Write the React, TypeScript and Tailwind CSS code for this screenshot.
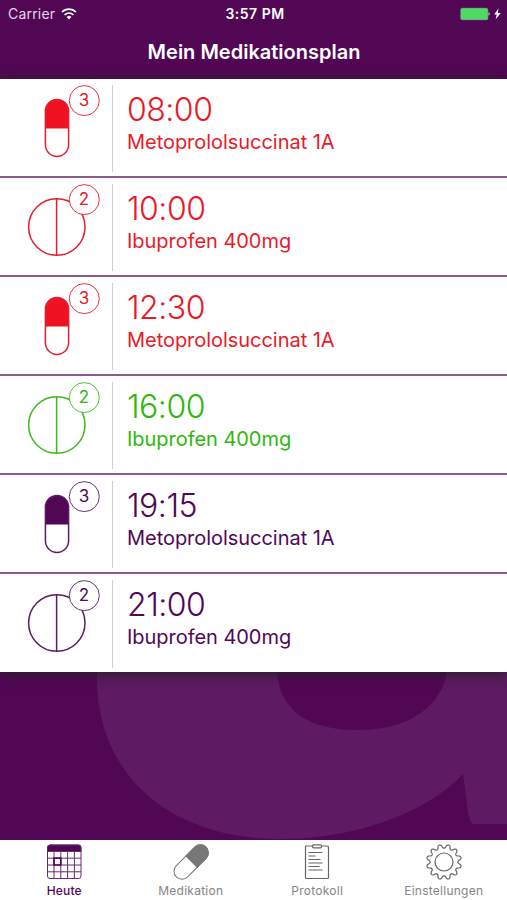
const RED = { text: 'text-[#e81a28]', stroke: '#e31d2b', fill: '#f01222' }
const GREEN = { text: 'text-[#2fb80c]', stroke: '#3fb81f', fill: '#2fb80c' }
const PURPLE = { text: 'text-[#520755]', stroke: '#5c1b62', fill: '#520755' }

interface Intake {
  time: string
  name: string
  kind: 'capsule' | 'tablet'
  count: number
  color: typeof RED
}

const intakes: Intake[] = [
  { time: '08:00', name: 'Metoprololsuccinat 1A', kind: 'capsule', count: 3, color: RED },
  { time: '10:00', name: 'Ibuprofen 400mg', kind: 'tablet', count: 2, color: RED },
  { time: '12:30', name: 'Metoprololsuccinat 1A', kind: 'capsule', count: 3, color: RED },
  { time: '16:00', name: 'Ibuprofen 400mg', kind: 'tablet', count: 2, color: GREEN },
  { time: '19:15', name: 'Metoprololsuccinat 1A', kind: 'capsule', count: 3, color: PURPLE },
  { time: '21:00', name: 'Ibuprofen 400mg', kind: 'tablet', count: 2, color: PURPLE },
]

function PillIcon({ kind, color }: { kind: Intake['kind']; color: typeof RED }) {
  return (
    <svg width="112" height="96" fill="none" stroke={color.stroke} strokeWidth="1.5">
      {kind === 'capsule' ? (
        <>
          <path d="M45.5 49.5V32a11.5 11.5 0 0 1 23 0v17.5z" fill={color.fill} stroke="none" />
          <rect x="45.4" y="20.4" width="23.2" height="57" rx="11.6" />
        </>
      ) : (
        <>
          <circle cx="56.8" cy="49" r="28.2" />
          <path d="M56.6 21v56" />
        </>
      )}
      <circle cx="84.3" cy="21.6" r="15" fill="white" strokeWidth="0.9" />
    </svg>
  )
}

function IntakeRow({ item, last }: { item: Intake; last: boolean }) {
  return (
    <div className={`flex flex-col ${last ? 'h-[98px]' : 'h-[99px]'}`}>
      <div className="flex-1 flex">
        <div className={`relative w-[112px] shrink-0 ${item.color.text}`}>
          <PillIcon kind={item.kind} color={item.color} />
          <span className="absolute left-[69px] top-[7px] w-[30px] h-[30px] flex items-center justify-center text-[17px]">
            {item.count}
          </span>
        </div>
        <div className="w-px mt-[6px] mb-[4px] bg-[#cfcfd2]" />
        <div className={`pl-[14px] pt-[11px] ${item.color.text}`}>
          <div className="text-[32px] leading-[40px] font-light tracking-[-0.5px]">{item.time}</div>
          <div className="text-[20px] leading-[24px] tracking-[-0.04px]">{item.name}</div>
        </div>
      </div>
      {!last && <div className="h-[2px] bg-[#8b5c90]" />}
    </div>
  )
}

// closed outline with rounded teeth, a gap sits at the top
function gearPath(teeth: number) {
  const pts: string[] = []
  const n = teeth * 16
  for (let i = 0; i < n; i++) {
    const a = (i / n) * Math.PI * 2
    const wave = Math.tanh(1.6 * Math.cos(a * teeth + Math.PI)) / Math.tanh(1.6)
    const r = 15.7 + 1.8 * wave
    pts.push(`${(18 + r * Math.sin(a)).toFixed(2)} ${(18 - r * Math.cos(a)).toFixed(2)}`)
  }
  return `M${pts.join('L')}Z`
}

function CalendarIcon() {
  return (
    <svg width="36" height="36" fill="none" stroke="#692c70" strokeWidth="1">
      <rect x="1.5" y="1" width="33.5" height="33.5" rx="2.5" />
      <path d="M1.5 7.5V3.5A2.5 2.5 0 0 1 4 1h28.5A2.5 2.5 0 0 1 35 3.5V7.5z" fill="#520755" />
      <path d="M8 8v26.5M14.8 8v26.5M21.6 8v26.5M28.4 8v26.5M1.5 14.2h33.5M1.5 21h33.5M1.5 27.8h33.5" />
      <path d="M8 14.2h6.8v6.8h-6.8z" strokeWidth="1.7" stroke="#520755" />
    </svg>
  )
}

function CapsuleIcon() {
  return (
    <svg width="36" height="36" fill="none" stroke="#777" strokeWidth="1">
      <g transform="rotate(45 18.2 18)">
        <path d="M10.2 17.5V5a8 8 0 0 1 16 0v12.500z" fill="#777" />
        <rect x="10.2" y="-3" width="16" height="42" rx="8" />
      </g>
    </svg>
  )
}

function ClipboardIcon() {
  return (
    <svg width="36" height="36" fill="none" stroke="#666" strokeWidth="1.2">
      <rect x="6.5" y="2" width="23" height="32.5" rx="1" />
      <rect x="13.5" y="0.8" width="9" height="3" rx="1" fill="white" />
      <path d="M9.500 8.500h14M9.500 12h7M9.500 15.500h12M9.500 19h14M9.500 22.500h11M9.500 26h14" strokeWidth="1" />
    </svg>
  )
}

function GearIcon() {
  return (
    <svg width="36" height="36" fill="none" stroke="#666" strokeWidth="1.2" strokeLinejoin="round">
      <path d={gearPath(12)} />
      <circle cx="18" cy="18" r="9" />
    </svg>
  )
}

const tabs = [
  { label: 'Heute', icon: <CalendarIcon />, active: true },
  { label: 'Medikation', icon: <CapsuleIcon /> },
  { label: 'Protokoll', icon: <ClipboardIcon /> },
  { label: 'Einstellungen', icon: <GearIcon /> },
]

export default function App() {
  return (
    <div className="w-[507px] h-[900px] overflow-hidden flex flex-col bg-[#520755] font-['Inter',sans-serif]">
      <header className="h-[79px] shrink-0 text-white">
        <div className="h-[27px] grid grid-cols-3 items-center pl-2 pr-[5px] text-[14px]">
          <div className="flex items-center gap-[6px] text-[#e6d5e8]">
            <span className="tracking-[0.2px]">Carrier</span>
            <svg width="16" height="12" viewBox="0 0 16 12" fill="none" stroke="white" strokeWidth="1.7">
              <path d="M1 4a10 10 0 0 1 14 0M3.6 6.8a6.3 6.3 0 0 1 8.8 0" />
              <path d="M8 11.5L5.6 9a3.4 3.4 0 0 1 4.8 0z" fill="white" stroke="none" />
            </svg>
          </div>
          <div className="text-center font-semibold tracking-[0.5px]">3:57 PM</div>
          <div className="flex justify-end items-center">
            <svg width="42" height="14" viewBox="0 0 42 14">
              <rect x="0.8" y="1.3" width="27" height="11.4" rx="1.5" fill="#4cd964" stroke="#94b898" strokeWidth="0.6" />
              <path d="M28.6 5.3q2.200 1.700 0 3.400z" fill="white" />
              <path d="M38.5 1.500L34.200 7.500h2.500L35.700 12.200 40.700 6h-2.900z" fill="white" />
            </svg>
          </div>
        </div>
        <h1 className="text-center text-[20px] leading-[50px] font-semibold pl-px">Mein Medikationsplan</h1>
      </header>

      <main className="relative z-10 shrink-0 bg-white shadow-[0_2px_12px_#222]">
        {intakes.map((item, i) => (
          <IntakeRow key={item.time} item={item} last={i === intakes.length - 1} />
        ))}
      </main>

      <div className="flex-1 min-h-0">
        <svg width="507" height="168" viewBox="0 672 507 168" className="block">
          <path
            d="M97 672C94 770 165 840 283 839C350 839 425 815 463 774C467 797 467 824 474 824H507V672H447C440 710 405 730 357 730C310 730 280 712 277 672Z"
            fill="#5e1a63"
          />
        </svg>
      </div>

      <nav className="h-[60px] shrink-0 grid grid-cols-4 bg-white pl-px">
        {tabs.map(tab => (
          <div key={tab.label} className={`flex flex-col items-center pt-[4px] ${tab.active ? 'text-[#520755]' : 'text-[#858585]'}`}>
            {tab.icon}
            <span className={`pt-px text-[12px] leading-[20px] ${tab.active ? 'font-medium tracking-[0.2px]' : 'tracking-[0.25px]'}`}>
              {tab.label}
            </span>
          </div>
        ))}
      </nav>
    </div>
  )
}
